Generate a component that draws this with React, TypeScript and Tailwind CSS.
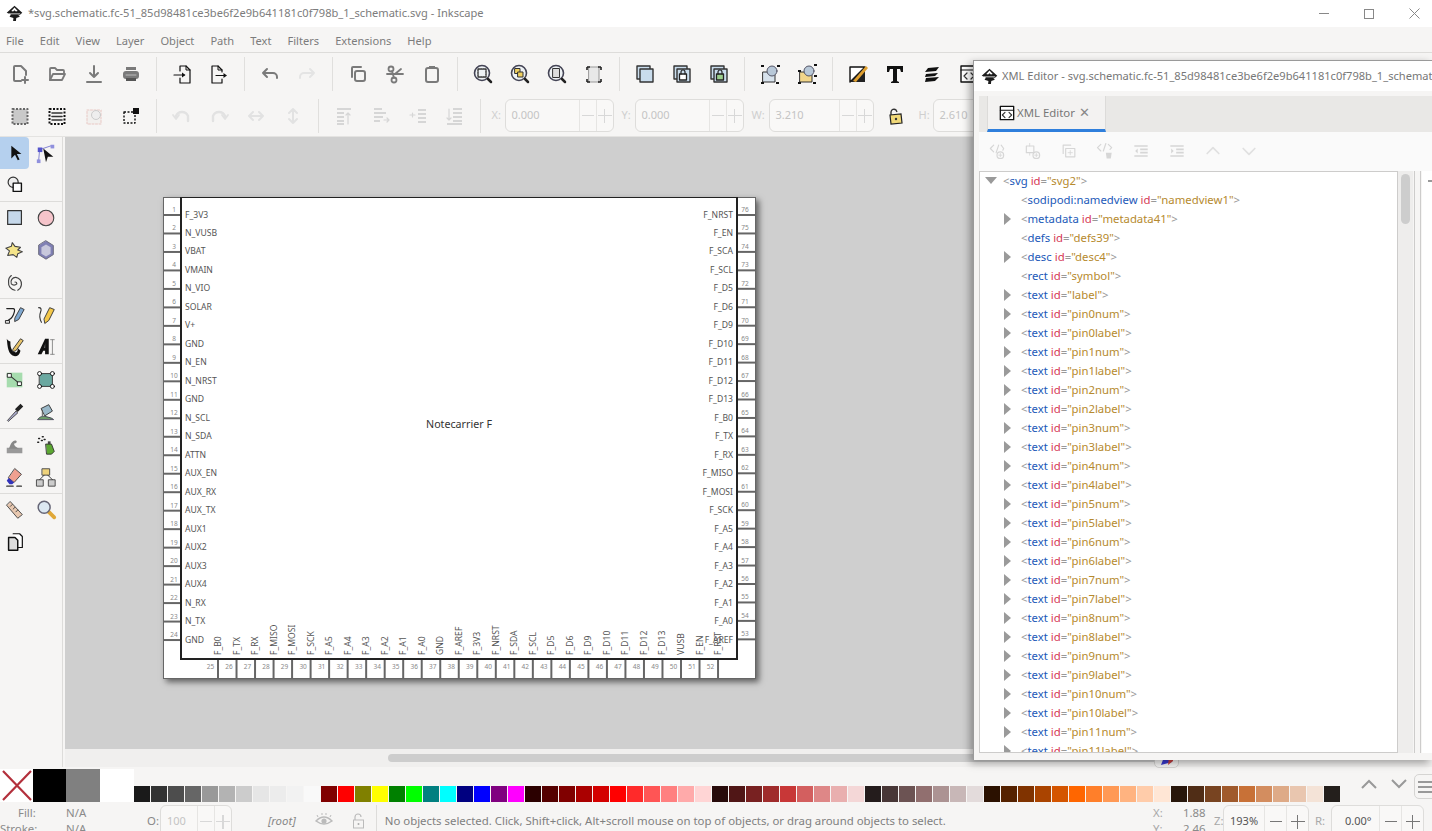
import type { ReactNode } from "react";

const G = "#7a7a7a";
const L = "#d6d6d6";

const Ico = ({ children, s = 24 }: { children: ReactNode; s?: number }) => (
  <svg width={s} height={s} viewBox="0 0 24 24" fill="none" strokeLinecap="round" strokeLinejoin="round">
    {children}
  </svg>
);

const Logo = () => (
  <svg width="17" height="17" viewBox="0 0 24 24" className="shrink-0">
    <path d="M12 1L23 11 19 14.5 17 13.5 19.5 16.5 14.5 18.5 14 22.5H10L10.5 18.5 5 16.5 7 13.5 1 11Z" fill="#1c1c1c" />
    <path d="M12 3.5L7.5 8.5 10 9 12 7.5 14 9 16.5 8.5Z" fill="#fff" />
    <path d="M4 12.5H20" stroke="#fff" strokeWidth="1.1" />
  </svg>
);

const Mag = ({ children }: { children?: ReactNode }) => (
  <Ico>
    <circle cx="11" cy="11" r="7.5" fill="#eef2f5" stroke="#445" strokeWidth="1.6" />
    {children}
    <path d="M17 17l3 3" stroke="#222" strokeWidth="2.5" />
  </Ico>
);

const Dotted = ({ fill = "none", c = "#111" }: { fill?: string; c?: string }) => (
  <rect x="4.5" y="5" width="15" height="15" stroke={c} strokeWidth="2" strokeDasharray="2 1.5" fill={fill} strokeLinecap="butt" />
);

const BlueSq = ({ x, y }: { x: number; y: number }) => (
  <rect x={x} y={y} width="13" height="13" fill="#c9dcec" stroke="#333" strokeWidth="1.4" />
);

const LockMini = ({ fill = "#fff" }: { fill?: string }) => (
  <>
    <rect x="9.5" y="12" width="7" height="6" fill={fill} stroke="#222" strokeWidth="1.3" />
    <path d="M11 12v-2a2 2 0 014 0v2" stroke="#222" strokeWidth="1.2" />
  </>
);

const row1: (ReactNode | null)[] = [
  <Ico><path d="M13 19H7a1 1 0 01-1-1V5a1 1 0 011-1h6l5 5v4" stroke={G} strokeWidth="2" /><path d="M17 15v6M14 18h6" stroke={G} strokeWidth="2" /></Ico>,
  <Ico><path d="M5 18V7a1 1 0 011-1h4l2 2h6a1 1 0 011 1v2" stroke={G} strokeWidth="1.8" /><path d="M5 18l3-6h12l-3 6z" stroke={G} strokeWidth="1.8" /></Ico>,
  <Ico><path d="M12 4v11M8 11l4 4 4-4M5 20h14" stroke={G} strokeWidth="2" /></Ico>,
  <Ico><rect x="7" y="5" width="10" height="3" fill={G} /><rect x="4" y="9" width="16" height="8" rx="3" fill={G} /><rect x="7" y="16" width="10" height="3" fill="#555" /><path d="M7 13h10" stroke="#bbb" /></Ico>,
  null,
  <Ico><path d="M10 9V4h6l4 4v13H10v-5" stroke="#111" strokeWidth="1.2" /><path d="M16 4v4h4" stroke="#111" /><path d="M4 13h10" stroke="#111" strokeWidth="1.2" /><path d="M12 10.5l3.5 2.5-3.5 2.5z" fill="#111" /></Ico>,
  <Ico><path d="M15 10V8l-4-4H5v17h10v-4" stroke="#111" strokeWidth="1.2" /><path d="M11 4v4h4" stroke="#111" /><path d="M9 13.5h9" stroke="#111" strokeWidth="1.2" /><path d="M16.5 11l3.5 2.5-3.5 2.5z" fill="#111" /></Ico>,
  null,
  <Ico><path d="M9 7l-4 4 4 4M5 11h10a4 4 0 014 4v1" stroke={G} strokeWidth="2" /></Ico>,
  <Ico><path d="M15 7l4 4-4 4M19 11H9a4 4 0 00-4 4v1" stroke="#e4e4e4" strokeWidth="2" /></Ico>,
  null,
  <Ico><path d="M6 15V6a1 1 0 011-1h8" stroke={G} strokeWidth="2" /><rect x="9" y="9" width="10" height="10" rx="2" stroke={G} strokeWidth="2" /></Ico>,
  <Ico><circle cx="8" cy="7" r="2.5" stroke={G} strokeWidth="1.8" /><circle cx="11" cy="18" r="2.5" stroke={G} strokeWidth="1.8" /><path d="M4 12h16M9 9l2 7M18 7l-6 5" stroke={G} strokeWidth="1.8" /></Ico>,
  <Ico><rect x="6" y="6" width="12" height="14" rx="2" stroke={G} strokeWidth="2" /><rect x="9" y="4" width="6" height="3" fill={G} /></Ico>,
  null,
  <Mag><rect x="7" y="7" width="8" height="8" stroke="#333" strokeWidth="1.4" strokeDasharray="1.5 1" /></Mag>,
  <Mag><rect x="7" y="6.5" width="5" height="5" fill="#f0d060" stroke="#333" /><rect x="10" y="10" width="5" height="5" fill="#f0d060" stroke="#333" /></Mag>,
  <Mag><rect x="8" y="6.5" width="6.5" height="9" fill="#ddd" stroke="#333" /></Mag>,
  <Ico><rect x="7" y="5" width="10" height="15" fill="#e8e8e8" stroke="#999" /><path d="M5 5h3M5 5v3M19 5h-3M19 5v3M5 20h3M5 20v-3M19 20h-3M19 20v-3" stroke="#222" strokeWidth="1.6" strokeLinecap="butt" /></Ico>,
  null,
  <Ico><BlueSq x={4} y={4} /><BlueSq x={7} y={7} /></Ico>,
  <Ico><BlueSq x={4} y={4} /><BlueSq x={7} y={7} /><LockMini /></Ico>,
  <Ico><BlueSq x={4} y={4} /><BlueSq x={7} y={7} /><LockMini fill="#9ccf8e" /></Ico>,
  null,
  <Ico><rect x="5" y="10" width="12" height="10" fill="#d7e2ec" stroke="#333" /><circle cx="14" cy="9" r="5" fill="#b8c8d8" stroke="#556" /><path d="M3 4h3M19 4h3M3 21h3M18 21h3" stroke="#111" strokeWidth="2" strokeLinecap="butt" /></Ico>,
  <Ico><rect x="5" y="10" width="12" height="10" fill="#f2d68a" stroke="#333" /><circle cx="14" cy="9" r="5" fill="#b8c8d8" stroke="#556" /><path d="M3 9h3M19 3h3M3 21h3M18 21h3M19 14h3" stroke="#111" strokeWidth="2" strokeLinecap="butt" /></Ico>,
  null,
  <Ico><path d="M4 5h15L4 20z" fill="#fff" stroke="#111" strokeWidth="1.4" /><path d="M4 20L19 5v15z" fill="#222" /><path d="M7 19L20 4l2 2L10 20z" fill="#e0a030" /></Ico>,
  <Ico><path d="M4 4h16v6h-2l-1-3h-3v12l2 1v1H8v-1l2-1V7H7l-1 3H4z" fill="#111" /></Ico>,
  <Ico><path d="M8 6l11-1-3 4L5 10zM6 12l12-1-3 3-10 1zM6 16l13-1-4 4-10 1z" fill="#111" /></Ico>,
  <Ico><rect x="4" y="4" width="16" height="16" stroke="#111" strokeWidth="1.4" fill="#fff" /><path d="M4 8h16" stroke="#111" strokeWidth="1.2" /><path d="M10 11l-3 3 3 3M14 11l3 3-3 3" stroke="#333" strokeWidth="1.2" /></Ico>,
];

const row2Left: (ReactNode | null)[] = [
  <Ico><Dotted fill="#c9c9c9" c="#666" /></Ico>,
  <Ico><Dotted /><path d="M7 9h10M7 12.5h10M7 16h10" stroke="#333" strokeWidth="1.6" /></Ico>,
  <Ico><rect x="5" y="6" width="14" height="14" stroke="#e8c8c4" strokeDasharray="2 1.5" fill="#f2f0ee" /><circle cx="14" cy="11" r="4.5" fill="#eee" stroke="#ccc" /></Ico>,
  <Ico><rect x="5" y="8" width="11" height="11" stroke="#111" strokeWidth="1.4" strokeDasharray="2 1.5" strokeLinecap="butt" /><rect x="14" y="4" width="6" height="6" fill="#111" /></Ico>,
  null,
  <Ico><path d="M6 12a6.5 6.5 0 0112 0v5" stroke="#e2e2e2" strokeWidth="2.4" /><path d="M3 11l3 4 3-4" stroke="#e2e2e2" strokeWidth="1.8" /></Ico>,
  <Ico><path d="M18 12a6.5 6.5 0 00-12 0v5" stroke="#e2e2e2" strokeWidth="2.4" /><path d="M15 11l3 4 3-4" stroke="#e2e2e2" strokeWidth="1.8" /></Ico>,
  <Ico><path d="M5 12h14M9 8l-4 4 4 4M15 8l4 4-4 4" stroke="#e2e2e2" strokeWidth="2" /></Ico>,
  <Ico><path d="M12 5v14M8 9l4-4 4 4M8 15l4 4 4-4" stroke="#e2e2e2" strokeWidth="2" /></Ico>,
  null,
  <Ico><path d="M5 5h14M5 9h7M5 13h7M5 17h7M5 20h7" stroke={L} strokeWidth="2" strokeLinecap="butt" /><path d="M16 20V9M14 11l2-2 2 2" stroke={L} strokeWidth="1.2" /></Ico>,
  <Ico><path d="M5 5h8M5 9h12M5 13h9M5 17h6" stroke={L} strokeWidth="2" strokeLinecap="butt" /><path d="M15 16h5M18 14l2 2-2 2" stroke={L} strokeWidth="1.2" /></Ico>,
  <Ico><path d="M12 6h8M12 10h8M12 14h8M12 18h8" stroke={L} strokeWidth="2" strokeLinecap="butt" /><path d="M4 11h5M6.5 9v4" stroke={L} strokeWidth="1.2" /></Ico>,
  <Ico><path d="M10 5h9M10 9h9M10 13h9M10 17h9M4 20h15" stroke={L} strokeWidth="2" strokeLinecap="butt" /><path d="M6 5v11M4 14l2 2 2-2" stroke={L} strokeWidth="1.2" /></Ico>,
];

const Spin = ({ w, value, strong, pad = "pl-[6px]", btn = "w-[17px]" }: { w: string; value: string; strong?: boolean; pad?: string; btn?: string }) => (
  <div className={`flex h-[33px] items-stretch rounded-md border border-[#dedddb] bg-[#f9f8f7] ${w}`}>
    <div className={`flex min-w-0 flex-1 items-center text-[11px] ${pad} ${strong ? "text-[#555]" : "text-[#c4c4c4]"}`}>{value}</div>
    <div className={`flex items-center justify-center border-l border-[#e6e5e3] ${btn} ${strong ? "text-[#777]" : "text-[#d8d8d8]"}`}>
      <span className="block h-[1.5px] w-[12px] bg-current" />
    </div>
    <div className={`relative flex items-center justify-center border-l border-[#e6e5e3] ${btn} ${strong ? "text-[#777]" : "text-[#d8d8d8]"}`}>
      <span className="block h-[1.5px] w-[14px] bg-current" />
      <span className="absolute h-[14px] w-[1.5px] bg-current" />
    </div>
  </div>
);

const Lbl = ({ t, c }: { t: string; c: string }) => <span className={`text-[11px] text-[#cfcfcf] ${c}`}>{t}</span>;

const toolbox: ReactNode[][][] = [
  [
    [
      <Ico s={22}><path d="M8 4v14l4-4 3 6 2-1-3-6h5z" fill="#111" /></Ico>,
      <Ico s={22}><path d="M5 9L4 20M6 8l12-4" stroke="#7a7ad0" /><rect x="3" y="6" width="5" height="5" fill="#5555cc" /><rect x="17" y="3" width="4" height="4" fill="#9090dd" /><rect x="2" y="19" width="4" height="4" fill="#9090dd" /><path d="M9 7l11 9-6 0-2 6z" fill="#111" /></Ico>,
    ],
    [
      <Ico s={22}><circle cx="10" cy="9" r="5.5" fill="#eee" stroke="#333" strokeWidth="1.3" /><rect x="10" y="10" width="9" height="9" fill="#fff" stroke="#111" strokeWidth="1.5" /></Ico>,
      <span />,
    ],
  ],
  [
    [
      <Ico s={22}><rect x="4" y="4" width="15" height="15" fill="#c6d8ea" stroke="#333" strokeWidth="1.3" /></Ico>,
      <Ico s={22}><circle cx="12" cy="12" r="8.5" fill="#f5c4ca" stroke="#444" strokeWidth="1.2" /></Ico>,
    ],
    [
      <Ico s={22}><path d="M9 4l3 4 6 1-3 3 5 2-5 2-1 4-4-3-6 1 2-5-4-3 6-2z" fill="#f4e48a" stroke="#444" strokeWidth="1.2" /></Ico>,
      <Ico s={22}><path d="M12 2l8 5v10l-8 5-8-5V7z" fill="#8080b4" stroke="#667" /><path d="M7 9l5-3 5 3v7l-5 3-5-3z" fill="#c8c8dc" /></Ico>,
    ],
    [
      <Ico s={22}><path d="M12 12a2 2 0 012 2 4 4 0 01-6 0 5 5 0 015-7 7 7 0 016 8 8 8 0 01-4 6M12 21a8 8 0 01-7-9 8 8 0 013-7" stroke="#444" strokeWidth="1.3" /></Ico>,
      <span />,
    ],
  ],
  [
    [
      <Ico s={22}><path d="M3 5h7c3 0 1 6-1 9s-4 3-6 5" stroke="#222" strokeWidth="1.3" /><path d="M12 15l6-11 4 2-6 11-4 2z" fill="#7fa8d0" stroke="#333" /><rect x="2" y="18" width="4" height="3" fill="#ddd" stroke="#222" /></Ico>,
      <Ico s={22}><path d="M4 4q4 0 2 5t1 11" stroke="#333" strokeWidth="1.2" /><path d="M10 16l6-12 5 2-6 12-4 3z" fill="#f4c84a" stroke="#333" /></Ico>,
    ],
    [
      <Ico s={22}><path d="M3 3c1 2 3 3 4 3 0 5 0 10 6 12 2-1 2-3 2-5l3 3c-1 4-3 6-6 6-8-1-8-11-9-19z" fill="#111" /><path d="M10 14l8-11 3 2-8 11-3 1z" fill="#e8c46a" stroke="#333" /></Ico>,
      <Ico s={22}><path d="M3 20L11 3h4v17h-4v-4H9l-2 4zM10.5 13H11V8z" fill="#111" /><path d="M19 4v16M17 4h4M17 20h4" stroke="#888" /></Ico>,
    ],
  ],
  [
    [
      <Ico s={22}><rect x="3" y="4" width="17" height="16" fill="#a6dcae" /><path d="M6 7l11 9" stroke="#333" strokeWidth="1.2" /><rect x="4" y="5" width="4" height="4" fill="#fff" stroke="#222" /><rect x="15" y="14" width="4" height="4" fill="#fff" stroke="#222" /></Ico>,
      <Ico s={22}><rect x="5" y="5" width="14" height="14" fill="#6aa8a0" stroke="#333" /><circle cx="5" cy="5" r="2.2" fill="#fff" stroke="#111" /><circle cx="19" cy="5" r="2.2" fill="#fff" stroke="#111" /><circle cx="5" cy="19" r="2.2" fill="#fff" stroke="#111" /><circle cx="19" cy="19" r="2.2" fill="#fff" stroke="#111" /></Ico>,
    ],
    [
      <Ico s={22}><path d="M4 21l9-10 2 2-10 9z" fill="#aac" stroke="#444" /><path d="M13 8l5-5 3 3-5 5-1 1-3-3z" fill="#222" /></Ico>,
      <Ico s={22}><path d="M7 8l8-4 4 7-8 5z" fill="#9ab8c8" stroke="#333" /><path d="M3 20c2-3 6-4 9-3s6 1 8 3z" fill="#6c9c68" stroke="#445" /><path d="M8 10v6" stroke="#555" /></Ico>,
    ],
  ],
  [
    [
      <Ico s={22}><rect x="3" y="15" width="17" height="6" fill="#999" /><path d="M5 16c2-2 2-8 7-9 3 0 2 3 0 3s-1 4 5 6z" fill="#888" /></Ico>,
      <Ico s={22}><path d="M12 11h6l3 8-3 3h-5z" fill="#5ca832" stroke="#333" /><path d="M14 8h3v3h-3z" fill="#444" /><path d="M4 5h1M8 3h1M7 7h1M10 6h1M3 9h1" stroke="#222" strokeWidth="1.6" /></Ico>,
    ],
    [
      <Ico s={22}><path d="M12 3l7 6-8 9-6-5z" fill="#f0a090" stroke="#444" /><path d="M5 13l6 5-2 2H6l-3-4z" fill="#3333bb" /><path d="M3 22h7M14 22h5" stroke="#333" strokeWidth="1.4" /></Ico>,
      <Ico s={22}><rect x="8" y="3" width="8" height="7" fill="#eed27a" stroke="#444" /><rect x="2" y="15" width="7" height="7" fill="#ccc" stroke="#444" /><rect x="15" y="15" width="7" height="7" fill="#ccc" stroke="#444" /><path d="M10 10l-5 5M14 10l5 5" stroke="#333" /></Ico>,
    ],
  ],
  [
    [
      <Ico s={22}><path d="M7 3l13 14-5 4L3 7z" fill="#e8c8b0" stroke="#444" /><path d="M7 8l2-2M10 11l2-2M13 14l2-2" stroke="#444" /></Ico>,
      <Ico s={22}><path d="M15 14l6 6" stroke="#e0a838" strokeWidth="4" /><circle cx="10" cy="9" r="6.5" fill="#dce8f2" stroke="#667" strokeWidth="1.6" /></Ico>,
    ],
    [
      <Ico s={22}><path d="M10 3h7l3 3v12h-5" stroke="#111" strokeWidth="1.3" fill="#fff" /><path d="M5 7h7l3 3v11H5z" fill="#ddd" stroke="#111" strokeWidth="1.6" /></Ico>,
      <span />,
    ],
  ],
];

const leftPins = ["F_3V3","N_VUSB","VBAT","VMAIN","N_VIO","SOLAR","V+","GND","N_EN","N_NRST","GND","N_SCL","N_SDA","ATTN","AUX_EN","AUX_RX","AUX_TX","AUX1","AUX2","AUX3","AUX4","N_RX","N_TX","GND"];
const rightPins = ["F_NRST","F_EN","F_SCA","F_SCL","F_D5","F_D6","F_D9","F_D10","F_D11","F_D12","F_D13","F_B0","F_TX","F_RX","F_MISO","F_MOSI","F_SCK","F_A5","F_A4","F_A3","F_A2","F_A1","F_A0","F_AREF"];
const bottomPins = ["F_B0","F_TX","F_RX","F_MISO","F_MOSI","F_SCK","F_A5","F_A4","F_A3","F_A2","F_A1","F_A0","GND","F_AREF","F_3V3","F_NRST","F_SDA","F_SCL","F_D5","F_D6","F_D9","F_D10","F_D11","F_D12","F_D13","VUSB","F_EN","F_RST"];

const Schematic = () => (
  <svg width="593" height="482" viewBox="0 0 593 482" className="absolute left-[98px] top-[60px] bg-white shadow-[3px_3px_6px_rgba(0,0,0,0.55)]" fontFamily="'Noto Sans', sans-serif">
    <rect x="0.5" y="0.5" width="592" height="481" fill="#fff" stroke="#666" />
    {leftPins.map((p, i) => (
      <g key={i}>
        <text x="11" y={15 + i * 18.48} fontSize="6.5" fill="#888" textAnchor="middle">{i + 1}</text>
        <line x1="0" x2="18" y1={18 + i * 18.48} y2={18 + i * 18.48} stroke="#666" strokeWidth="2" />
        <text x="22" y={20.5 + i * 18.48} fontSize="8.6" fill="#555">{p}</text>
      </g>
    ))}
    {rightPins.map((p, i) => (
      <g key={i}>
        <text x="582" y={15 + i * 18.45} fontSize="6.5" fill="#888" textAnchor="middle">{76 - i}</text>
        <line x1="574" x2="592" y1={18 + i * 18.45} y2={18 + i * 18.45} stroke="#666" strokeWidth="2" />
        <text x="570" y={20.5 + i * 18.48} fontSize="8.6" fill="#555" textAnchor="end">{p}</text>
      </g>
    ))}
    {bottomPins.map((p, i) => (
      <g key={i}>
        <text x={47.5 + i * 18.52} y="472" fontSize="6.5" fill="#888" textAnchor="middle">{25 + i}</text>
        <line x1={55 + i * 18.52} x2={55 + i * 18.52} y1="462" y2="481" stroke="#666" strokeWidth="2" />
        <text transform={`translate(${58 + i * 18.52} 458) rotate(-90)`} fontSize="8.6" fill="#555">{p}</text>
      </g>
    ))}
    <rect x="18" y="0" width="556" height="462" fill="none" stroke="#222" strokeWidth="2" />
    <text x="296" y="231" fontSize="10.7" fill="#333" textAnchor="middle">Notecarrier F</text>
  </svg>
);

const palette = [
  "#1a1a1a","#333333","#4d4d4d","#666666","#999999","#b3b3b3","#cccccc","#e6e6e6","#ececec","#f2f2f2","#f9f9f9",
  "#800000","#ff0000","#808000","#ffff00","#008000","#00ff00","#008080","#00ffff","#000080","#0000ff","#800080","#ff00ff",
  "#2b0000","#550000","#800000","#aa0000","#d40000","#ff0000","#ff2a2a","#ff5555","#ff8080","#ffaaaa","#ffd5d5",
  "#280b0b","#501616","#782121","#a02c2c","#c83737","#d35f5f","#de8787","#e9afaf","#f4d7d7",
  "#241c1c","#483737","#6c5353","#916f6f","#ac9393","#c8b7b7","#e3dbdb",
  "#2b1100","#552200","#803300","#aa4400","#d45500","#ff6600","#ff7f2a","#ff9955","#ffb380","#ffccaa","#ffe6d5",
  "#28170b","#502d16","#784421","#a05a2c","#c87137","#d38d5f","#deaa87","#e9c6af","#f4e3d7","#241f1c",
];

type Node = { tag: string; id: string; arrow: boolean };
const nodes: Node[] = [
  { tag: "sodipodi:namedview", id: "namedview1", arrow: false },
  { tag: "metadata", id: "metadata41", arrow: true },
  { tag: "defs", id: "defs39", arrow: false },
  { tag: "desc", id: "desc4", arrow: true },
  { tag: "rect", id: "symbol", arrow: false },
  { tag: "text", id: "label", arrow: true },
];
for (let i = 0; i < 12; i++) {
  nodes.push({ tag: "text", id: `pin${i}num`, arrow: true });
  nodes.push({ tag: "text", id: `pin${i}label`, arrow: true });
}

const Attr = ({ tag, id }: { tag: string; id: string }) => (
  <span className="whitespace-pre text-[11.35px]">
    <span className="text-[#999]">&lt;</span>
    <span className="text-[#2259b8]">{tag}</span>{" "}
    <span className="text-[#d63a55]">id</span>
    <span className="text-[#999]">=</span>
    <span className="text-[#b68a2e]">"{id}"</span>
    <span className="text-[#999]">&gt;</span>
  </span>
);

const xmlTools: ReactNode[] = [
  <Ico s={20}><path d="M8 5L4 9l4 4M14 5l-3 9M17 5l3 4-1 2" stroke={L} strokeWidth="1.4" /><circle cx="16" cy="17" r="4" stroke={L} strokeWidth="1.4" /><path d="M16 15v4M14 17h4" stroke={L} /></Ico>,
  <Ico s={20}><rect x="4" y="6" width="9" height="8" stroke={L} strokeWidth="1.4" /><path d="M8 3v3M8 14v3" stroke={L} /><circle cx="16" cy="17" r="4" stroke={L} strokeWidth="1.4" /><path d="M16 15v4M14 17h4" stroke={L} /></Ico>,
  <Ico s={20}><path d="M5 15V5h9" stroke={L} strokeWidth="1.4" /><rect x="8" y="9" width="11" height="10" stroke={L} strokeWidth="1.4" /><path d="M13.5 11.5v5M11 14h5" stroke={L} /></Ico>,
  <Ico s={20}><path d="M7 4L3 8l4 4M13 3l-3 9M16 4l4 4-2 2" stroke={L} strokeWidth="1.4" /><path d="M13 14h7l-1 7h-5z" fill={L} /></Ico>,
  <Ico s={20}><path d="M4 6h16M11 10h9M11 14h9M4 18h16" stroke={L} strokeWidth="2" strokeLinecap="butt" /><path d="M8 9l-3 3 3 3z" fill={L} /></Ico>,
  <Ico s={20}><path d="M4 6h16M11 10h9M11 14h9M4 18h16" stroke={L} strokeWidth="2" strokeLinecap="butt" /><path d="M5 9l3 3-3 3z" fill={L} /></Ico>,
  <Ico s={20}><path d="M5 15l7-7 7 7" stroke="#e0e0e0" strokeWidth="2" /></Ico>,
  <Ico s={20}><path d="M5 9l7 7 7-7" stroke="#e0e0e0" strokeWidth="2" /></Ico>,
];

const XmlWindow = () => (
  <div className="absolute left-[973px] top-[60px] flex h-[700px] w-[459px] flex-col overflow-hidden border-l border-t border-[#9a9a9a] bg-[#f6f5f4] shadow-[-3px_3px_8px_rgba(0,0,0,0.35)]">
    <div className="flex h-[30px] shrink-0 items-center gap-[4px] bg-white pl-[7px] text-[11.1px] text-[#777] whitespace-nowrap">
      <Logo />
      <span>XML Editor - svg.schematic.fc-51_85d98481ce3be6f2e9b641181c0f798b_1_schematic.svg - Inkscape</span>
    </div>
    <div className="ml-[5px] mt-[5px] flex h-[36px] shrink-0 bg-[#e9e8e6] pl-[8px]">
      <div className="flex w-[119px] items-center border-x border-[#dcdbd9] border-b-[3px] border-b-[#2f7fdc] bg-[#f3f2f1] pl-[11px] text-[11.4px] text-[#777]">
        <Ico s={16}><rect x="2" y="2" width="20" height="20" stroke="#111" strokeWidth="2" fill="#fff" /><path d="M2 8h20" stroke="#111" strokeWidth="1.6" /><path d="M9 11l-4 4 4 4M15 11l4 4-4 4" stroke="#333" strokeWidth="1.6" /></Ico>
        <span className="ml-[2px]">XML Editor</span>
        <span className="ml-[4px] text-[13px] leading-none text-[#888]">✕</span>
      </div>
    </div>
    <div className="ml-[5px] flex h-[39px] shrink-0 items-center bg-[#fafafa] pb-[2px]">
      {xmlTools.map((t, i) => (
        <div key={i} className="flex w-[36px] justify-center">{t}</div>
      ))}
    </div>
    <div className="ml-[5px] flex min-h-0 flex-1">
      <div className="h-[582px] w-[419px] shrink-0 overflow-hidden border border-[#cdcccb] bg-white">
        <div className="relative -mt-[1px] flex h-[19px] items-center pl-[23px]">
          <span className="absolute left-[5px] top-[6px] h-0 w-0 border-x-[6px] border-t-[7px] border-x-transparent border-t-[#9a9a9a]" />
          <Attr tag="svg" id="svg2" />
        </div>
        {nodes.map((n) => (
          <div key={n.id} className="relative flex h-[19px] items-center pl-[41px]">
            {n.arrow && <span className="absolute left-[24px] top-[4px] h-0 w-0 border-y-[6px] border-l-[7px] border-y-transparent border-l-[#9a9a9a]" />}
            <Attr tag={n.tag} id={n.id} />
          </div>
        ))}
      </div>
      <div className="h-[582px] w-[15px] shrink-0 bg-[#eeedec] p-[3px]">
        <div className="h-[50px] w-[9px] rounded-full bg-[#cdcdcd]" />
      </div>
      <div className="mx-[1px] h-[582px] w-[7px] shrink-0 border-x border-[#cdcccb] bg-[#f6f5f4]" />
      <div className="h-[582px] flex-1 bg-white pl-[6px] pt-[9px]">
        <span className="block h-[2px] w-[6px] bg-[#999]" />
      </div>
    </div>
  </div>
);

export default function App() {
  return (
    <div className="relative flex h-[831px] w-[1432px] flex-col overflow-hidden bg-[#f6f5f4] font-['Noto_Sans',sans-serif] text-[#777]">
      {/* title bar */}
      <div className="flex h-[27px] shrink-0 items-center bg-white pl-[6px] pr-[12px] text-[11.1px] whitespace-nowrap">
        <Logo />
        <span className="ml-[5px] text-[#7c7c7c]">*svg.schematic.fc-51_85d98481ce3be6f2e9b641181c0f798b_1_schematic.svg - Inkscape</span>
        <div className="ml-auto flex items-center gap-[35px]">
          <span className="block h-[1px] w-[10px] bg-[#888]" />
          <span className="block h-[10px] w-[10px] border border-[#888]" />
          <svg width="11" height="11" viewBox="0 0 11 11"><path d="M0.5 0.5l10 10M10.5 0.5l-10 10" stroke="#888" /></svg>
        </div>
      </div>
      {/* menu */}
      <div className="flex h-[26px] shrink-0 items-center gap-[16px] border-b border-[#dddcda] pl-[6px] pt-[3px] text-[11.1px] text-[#7c7c7c]">
        {["File", "Edit", "View", "Layer", "Object", "Path", "Text", "Filters", "Extensions", "Help"].map((m) => (
          <span key={m}>{m}</span>
        ))}
      </div>
      {/* command bar */}
      <div className="flex h-[42px] shrink-0 items-center pl-[1.5px]">
        {row1.map((ic, i) =>
          ic ? (
            <div key={i} className="flex w-[37px] shrink-0 justify-center">{ic}</div>
          ) : (
            <div key={i} className="flex w-[14px] shrink-0 justify-center"><span className="block h-[34px] w-px bg-[#e0dfdd]" /></div>
          ),
        )}
      </div>
      {/* selector bar */}
      <div className="flex h-[42px] shrink-0 items-center border-b border-[#e4e3e1] pl-[1.5px]">
        {row2Left.map((ic, i) =>
          ic ? (
            <div key={i} className="flex w-[37px] shrink-0 justify-center">{ic}</div>
          ) : (
            <div key={i} className="flex w-[14px] shrink-0 justify-center"><span className="block h-[34px] w-px bg-[#e0dfdd]" /></div>
          ),
        )}
        <div className="flex w-[14px] shrink-0 justify-center"><span className="block h-[34px] w-px bg-[#e0dfdd]" /></div>
        <Lbl t="X:" c="ml-[4px] w-[13px]" />
        <Spin w="w-[109px]" value="0.000" />
        <Lbl t="Y:" c="ml-[8px] w-[13px]" />
        <Spin w="w-[109px]" value="0.000" />
        <Lbl t="W:" c="ml-[8px] w-[17px]" />
        <Spin w="w-[105px]" value="3.210" />
        <div className="ml-[12px] flex w-[20px] justify-center">
          <svg width="16" height="18" viewBox="0 0 16 18"><path d="M3 8V5a3 3 0 015-2l1 2" stroke="#333" strokeWidth="1.4" fill="none" /><path d="M2 8l11-1 1 9-11 1z" fill="#f0d878" stroke="#222" strokeWidth="1.2" /><circle cx="8" cy="12" r="1.2" fill="#333" /></svg>
        </div>
        <Lbl t="H:" c="ml-[13px] w-[14px]" />
        <Spin w="w-[109px]" value="2.610" />
      </div>
      {/* workspace */}
      <div className="flex min-h-0 flex-1">
        <div className="w-[63px] shrink-0 border-r border-[#dddcda]">
          {toolbox.map((group, gi) => (
            <div key={gi} className={gi < 5 ? "border-b border-[#dddcda]" : ""}>
              {group.map((rowIcons, ri) => (
                <div key={ri} className="flex h-[32px]">
                  {rowIcons.map((ic, ci) => (
                    <div
                      key={ci}
                      className={`flex items-center justify-center ${ci === 0 ? "w-[29px]" : "w-[33px]"} ${gi === 0 && ri === 0 && ci === 0 ? "rounded-r-[4px] bg-[#b5d0ee]" : ""}`}
                    >
                      {ic}
                    </div>
                  ))}
                </div>
              ))}
            </div>
          ))}
        </div>
        <div className="flex min-w-0 flex-1 flex-col pl-[2px]">
          <div className="relative flex-1 bg-[#cfcfcf]">
            <Schematic />
          </div>
          <div className="flex h-[18px] shrink-0 items-center bg-[#f0efee] pl-[323px]">
            <div className="h-[8px] w-[782px] rounded-full bg-[#cdcdcd]" />
          </div>
        </div>
      </div>
      {/* palette */}
      <div className="flex h-[35px] shrink-0 items-end">
        <div className="flex h-[33px] w-[33px] shrink-0 items-center justify-center bg-white">
          <svg width="32" height="33" viewBox="0 0 32 33"><path d="M2 2l28 29M30 2L2 31" stroke="#b3303c" strokeWidth="2.2" /></svg>
        </div>
        <div className="h-[33px] w-[33px] shrink-0 bg-black" />
        <div className="h-[33px] w-[34px] shrink-0 bg-[#808080]" />
        <div className="h-[33px] w-[34px] shrink-0 bg-white" />
        <div className="flex h-[16px] shrink-0">
          {palette.map((c, i) => (
            <div key={i} className="h-[16px] w-[17px] border-r border-[#f6f5f4]" style={{ background: c }} />
          ))}
        </div>
        <div className="ml-[19px] flex h-[33px] items-start pt-[9px]">
          <svg width="18" height="12" viewBox="0 0 18 12"><path d="M2 10l7-7 7 7" stroke="#999" strokeWidth="2" fill="none" /></svg>
          <svg width="18" height="12" viewBox="0 0 18 12" className="ml-[12px]"><path d="M2 2l7 7 7-7" stroke="#999" strokeWidth="2" fill="none" /></svg>
          <div className="ml-[6px] mt-[-4px] flex h-[25px] w-[20px] flex-col justify-center gap-[3px] rounded-l-[5px] border border-[#d5d4d2] pl-[3px]">
            <span className="block h-[2px] w-[16px] bg-[#999]" />
            <span className="block h-[2px] w-[16px] bg-[#999]" />
            <span className="block h-[2px] w-[16px] bg-[#999]" />
          </div>
        </div>
      </div>
      {/* status bar */}
      <div className="flex h-[29px] shrink-0 text-[11.4px]">
        <div className="w-[66px] shrink-0 pl-[18px] pt-[3px] leading-[16px] text-[#8a8a8a]">
          <div>Fill:</div>
          <div className="-ml-[18px]">Stroke:</div>
        </div>
        <div className="w-[81px] shrink-0 pt-[3px] leading-[16px] text-[#8a8a8a]">
          <div>N/A</div>
          <div>N/A</div>
        </div>
        <span className="w-[13px] shrink-0 pt-[10px] text-[#888]">O:</span>
        <div className="h-[33px] pt-[3px]">
          <Spin w="w-[72px]" value="100" />
        </div>
        <span className="ml-[36px] shrink-0 pt-[10px] italic text-[#888]">[root]</span>
        <div className="ml-[18px] w-[20px] shrink-0 pt-[10px]">
          <svg width="20" height="16" viewBox="0 0 20 16"><path d="M2 9q8-8 16 0-8 6-16 0z" fill="none" stroke="#bbb" strokeWidth="1.4" /><circle cx="10" cy="9" r="2.6" fill="#bbb" /><path d="M4 5l-1-2M8 3V1M12 3V1M16 5l1-2" stroke="#bbb" /></svg>
        </div>
        <div className="ml-[17px] w-[18px] shrink-0 pt-[10px]">
          <svg width="16" height="18" viewBox="0 0 16 18"><path d="M4 8V5a3 3 0 016 0" stroke="#bbb" strokeWidth="1.2" fill="none" /><rect x="2.5" y="8" width="10" height="8" fill="#f6f5f4" stroke="#bbb" /><circle cx="7.5" cy="12" r="1" fill="#aaa" /></svg>
        </div>
        <span className="ml-[7px] mt-[3px] block h-[26px] w-px shrink-0 bg-[#dddcda]" />
        <span className="ml-[8px] shrink-0 whitespace-nowrap pt-[10px] text-[#808080]">No objects selected. Click, Shift+click, Alt+scroll mouse on top of objects, or drag around objects to select.</span>
        <div className="ml-auto flex shrink-0 pr-[8px]">
          <span className="w-[30px] pt-[3px] leading-[16px] text-[#a8a8a8]"><div>X:</div><div>Y:</div></span>
          <span className="w-[31px] pt-[3px] leading-[16px] text-[#8a8a8a]"><div>1.88</div><div>2.46</div></span>
          <span className="w-[9px] pt-[10px] text-[#a8a8a8]">Z:</span>
          <div className="pt-[3px]"><Spin w="w-[86px]" value="193%" strong btn="w-[22px]" /></div>
          <span className="ml-[6px] w-[16px] pt-[10px] text-[#a8a8a8]">R:</span>
          <div className="pt-[3px]"><Spin w="w-[93px]" value="0.00°" strong pad="pl-[13px]" btn="w-[22px]" /></div>
        </div>
      </div>
      {/* grip peeking out under the dialog */}
      <div className="absolute left-[1154px] top-[755px] flex h-[13px] w-[25px] items-end justify-center rounded-b-[5px] border border-[#d5d4d2] bg-[#f6f5f4]">
        <svg width="14" height="10" viewBox="0 0 14 10"><path d="M1 8L12 5l1-5H4z" fill="#3a3ad0" /><path d="M8 8l5-4V0H9z" fill="#c84040" /></svg>
      </div>
      <XmlWindow />
    </div>
  );
}
